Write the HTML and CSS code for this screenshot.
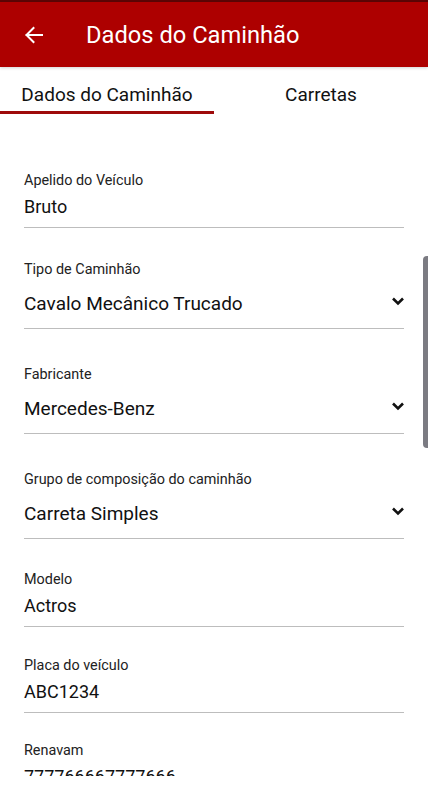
FILE: index.html
```html
<!DOCTYPE html>
<html lang="pt">
<head>
<meta charset="utf-8">
<link rel="stylesheet" href="styles.css">
</head>
<body>
<div class="app">
  <div class="statusbar"></div>
  <header class="appbar">
    <svg class="back" width="24" height="24" viewBox="0 0 24 24"><path d="M20 12H4.5M11.5 5L4.5 12l7 7" fill="none" stroke="#fff" stroke-width="2" stroke-linecap="square"/></svg>
    <h1 class="title">Dados do Caminhão</h1>
  </header>
  <nav class="tabs">
    <div class="tab active">Dados do Caminhão</div>
    <div class="tab">Carretas</div>
  </nav>
  <main class="content">
    <div class="field text first">
      <div class="label">Apelido do Veículo</div>
      <div class="value">Bruto</div>
    </div>
    <div class="field select f2">
      <div class="label">Tipo de Caminhão</div>
      <div class="value">Cavalo Mecânico Trucado<svg class="chev" width="14" height="10" viewBox="0 0 14 10"><path d="M2 2.5l5 5 5-5" fill="none" stroke="#111" stroke-width="2.6"/></svg></div>
    </div>
    <div class="field select f3">
      <div class="label">Fabricante</div>
      <div class="value">Mercedes-Benz<svg class="chev" width="14" height="10" viewBox="0 0 14 10"><path d="M2 2.5l5 5 5-5" fill="none" stroke="#111" stroke-width="2.6"/></svg></div>
    </div>
    <div class="field select f3">
      <div class="label">Grupo de composição do caminhão</div>
      <div class="value">Carreta Simples<svg class="chev" width="14" height="10" viewBox="0 0 14 10"><path d="M2 2.5l5 5 5-5" fill="none" stroke="#111" stroke-width="2.6"/></svg></div>
    </div>
    <div class="field text f5">
      <div class="label">Modelo</div>
      <div class="value">Actros</div>
    </div>
    <div class="field text f6">
      <div class="label">Placa do veículo</div>
      <div class="value">ABC1234</div>
    </div>
    <div class="field text f7">
      <div class="label">Renavam</div>
      <div class="value">777766667777666</div>
    </div>
    <div class="scrollbar"></div>
  </main>
  <div class="bottom"></div>
</div>
</body>
</html>
```

FILE: styles.css
```css
* { box-sizing: border-box; }
html, body { margin: 0; padding: 0; background: #fff; }
body { font-family: Roboto, "Noto Sans", sans-serif; color: #111; }
.app { width: 428px; height: 800px; display: flex; flex-direction: column; overflow: hidden; }
.statusbar { height: 2px; background: #5c0505; }
.appbar { height: 65px; background: #ad0000; display: flex; align-items: center; padding-left: 22px; box-shadow: 0 1px 3px rgba(0,0,0,0.18); position: relative; z-index: 1; }
.back { width: 24px; height: 24px; margin-top: 0; }
.title { margin: 0 0 0 40px; font-size: 23.7px; font-weight: 400; color: #fff; letter-spacing: 0; }
.tabs { height: 47px; display: flex; flex: none; }
.tab { width: 214px; display: flex; align-items: center; justify-content: center; font-size: 19px; color: #111; padding-top: 7px; }
.tab.active { border-bottom: 3px solid #9e0a0a; padding-top: 10px; }
.content { height: 662px; flex: none; overflow: hidden; position: relative; padding: 0 24px; }
.field { border-bottom: 1px solid #bdbdbd; }
.label { font-size: 14.4px; line-height: 16px; color: #222; }
.value { font-size: 18px; line-height: 24px; color: #111; display: flex; align-items: center; justify-content: space-between; }
.field.text .value { margin-top: 6px; padding-bottom: 8px; }
.field.select .value { margin-top: 14px; padding-bottom: 12px; font-size: 19px; }
.chev { margin-right: -1px; margin-top: -6px; }
.first { margin-top: 59px; }
.f2 { margin-top: 34px; }
.f3 { margin-top: 38px; }
.f5 { margin-top: 33px; }
.f6 { margin-top: 31px; }
.f7 { margin-top: 30px; border-bottom: none; }
.scrollbar { position: absolute; right: 0; top: 142px; width: 5px; height: 192px; background: #7b7b82; border-radius: 4px 0 0 4px; }
.bottom { flex: 1; background: #fff; }
```
